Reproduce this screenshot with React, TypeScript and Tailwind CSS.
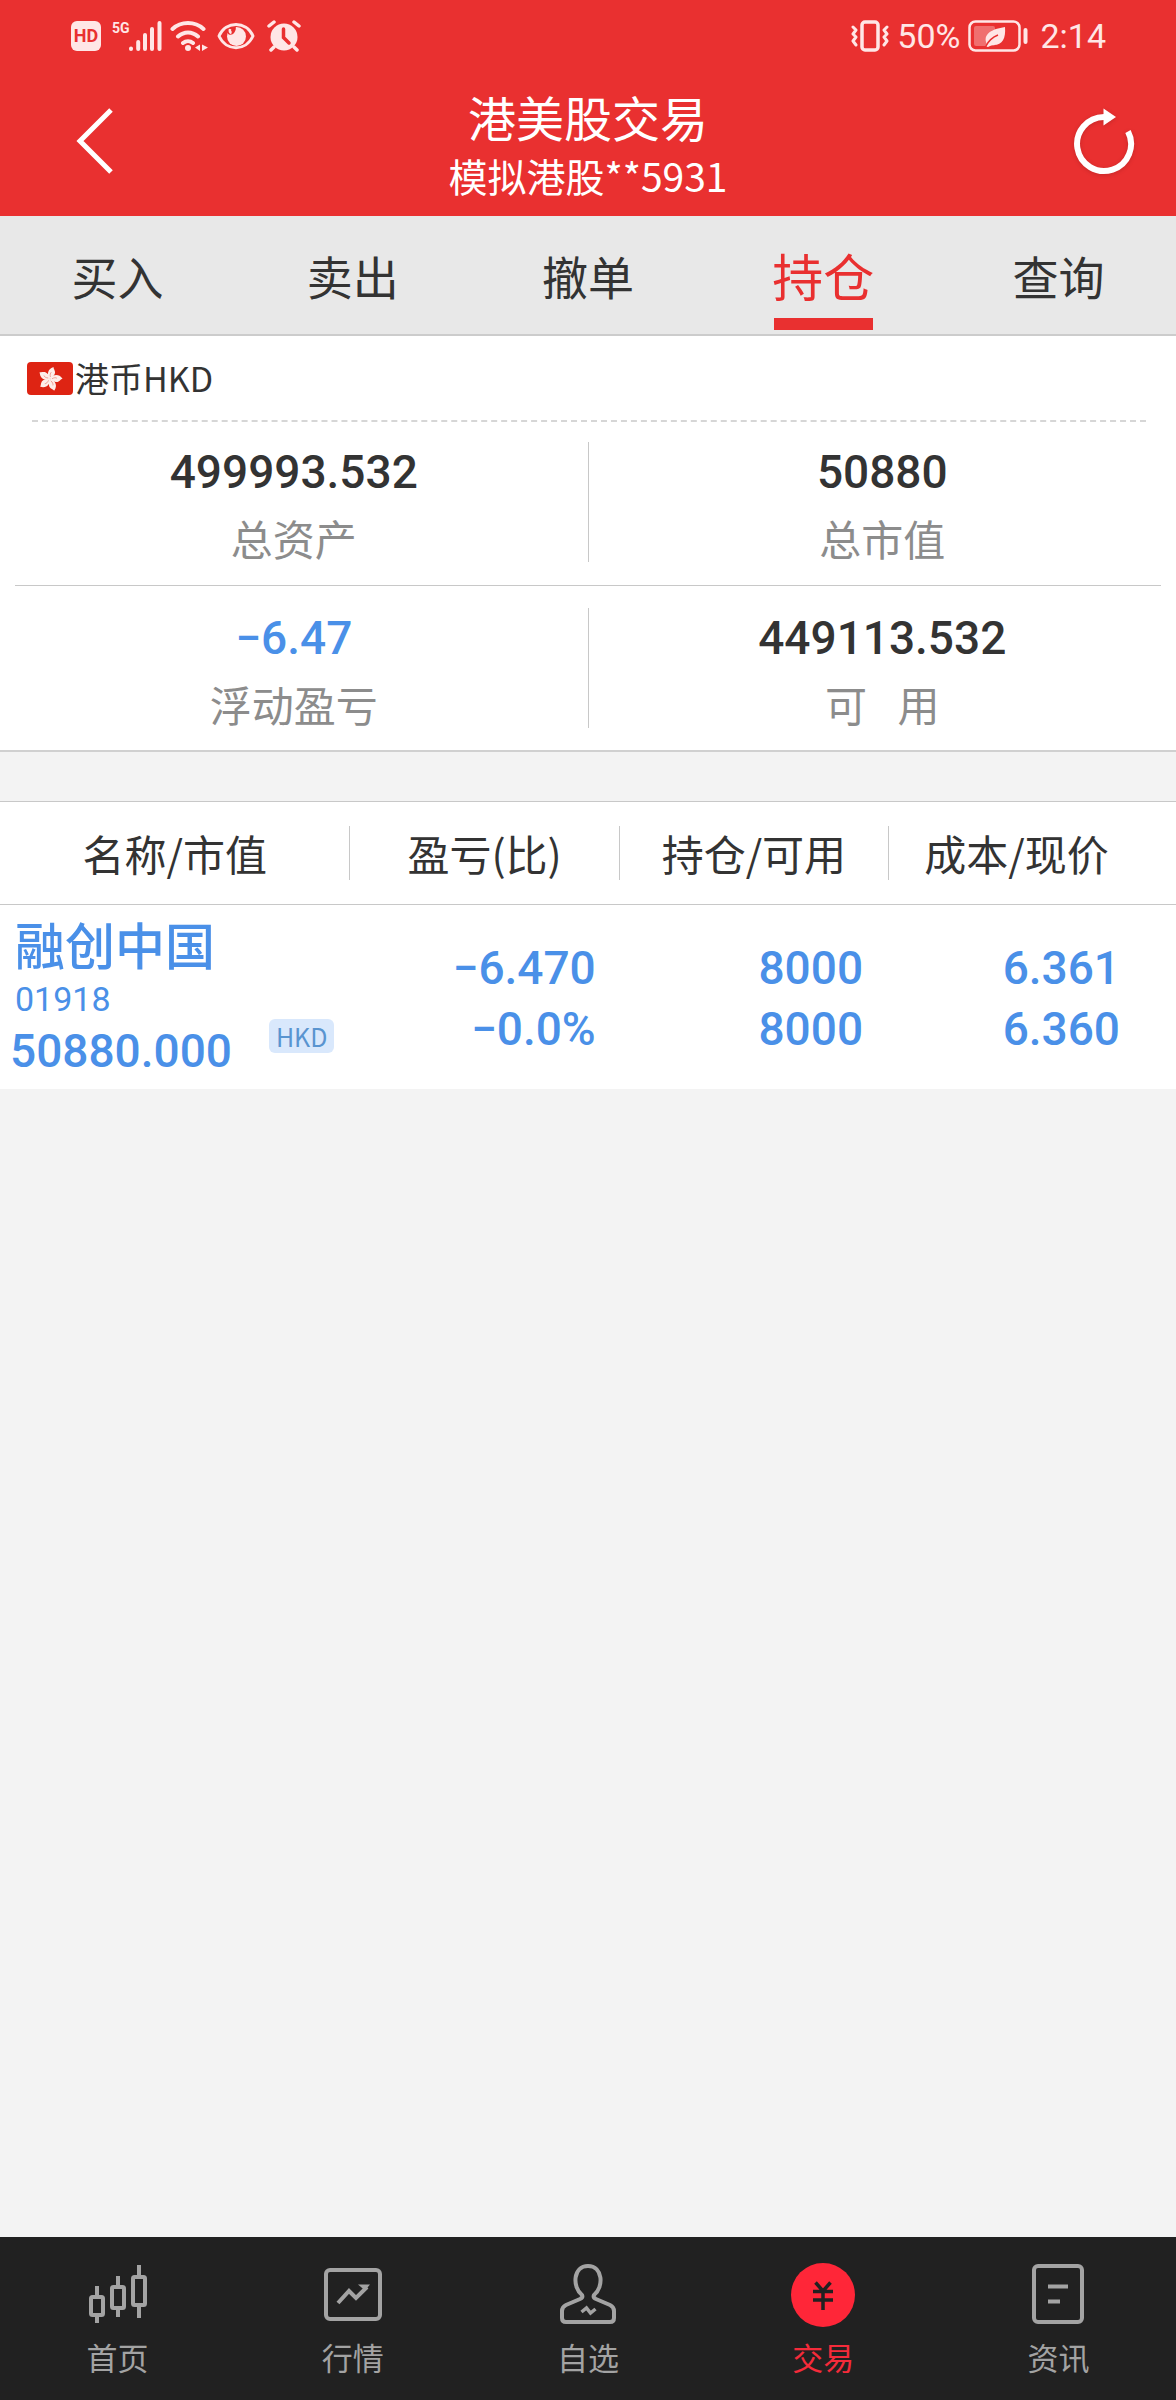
import { useState, type ReactNode } from "react";

const TABS = ["买入", "卖出", "撤单", "持仓", "查询"];

const SUMMARY = [
  [
    { label: "总资产", value: "499993.532" },
    { label: "总市值", value: "50880" },
  ],
  [
    { label: "浮动盈亏", value: "−6.47", down: true },
    { label: "可\u2002\u00a0用", value: "449113.532" },
  ],
];

const COLUMNS = [
  { title: "名称/市值", width: "w-[29.8%]" },
  { title: "盈亏(比)", width: "w-[22.9%]" },
  { title: "持仓/可用", width: "w-[22.9%]" },
  { title: "成本/现价", width: "w-[24.4%] pr-8" },
];

const POSITIONS = [
  {
    name: "融创中国",
    code: "01918",
    marketValue: "50880.000",
    currency: "HKD",
    profit: "−6.470",
    ratio: "−0.0%",
    held: "8000",
    available: "8000",
    cost: "6.361",
    price: "6.360",
  },
];

function StatusBar() {
  return (
    <div className="flex h-[72px] items-center justify-between pr-[70px] pl-[71px] text-[#ffe6e6]">
      <div className="flex items-center">
        <div className="flex size-[30px] items-center justify-center rounded-md bg-[#ffe6e6] font-['Roboto',sans-serif] text-[18px] leading-none font-bold text-[#e93030]">
          HD
        </div>
        <div className="ml-[11px] w-4 self-start font-['Roboto',sans-serif] text-[14px] leading-[16px] font-bold">
          5G
        </div>
        <svg width="34" height="32" viewBox="0 0 34 32" stroke="currentColor" strokeWidth="4" strokeLinecap="round">
          <path d="M3 28.5v.5M10.200 22v7M17 15v14M24 9v20M31.500 3v26" />
        </svg>
        <svg className="ml-2" width="38" height="32" viewBox="0 0 38 32" fill="none" stroke="currentColor" strokeWidth="4" strokeLinecap="round">
          <path d="M2.500 9C11 1 25 1 33.500 9M8 16.500c6-5.500 14-5.500 20 0M13 23c3-2.500 7-2.500 10 0" />
          <circle cx="18" cy="28" r="3" fill="currentColor" stroke="none" />
          <path d="M30 24.500V31l-5-3.500zM32 24.500V31l6-3.500z" fill="currentColor" stroke="none" />
        </svg>
        <svg className="ml-[9px]" width="38" height="28" viewBox="0 0 38 28" fill="none">
          <circle cx="19.500" cy="14.500" r="9.500" fill="currentColor" />
          <path d="M10 10c2-4 5-6.500 8.500-6.500 1 4-.5 6.500-2.500 8.500-2 1.500-5 1-6-2z" fill="#e93030" />
          <path d="M13 7c-.5 2 0 3.500 1.500 4" stroke="currentColor" strokeWidth="2.500" />
          <path d="M2 14C9-1.500 29-1.500 36 14 29 29.500 9 29.500 2 14z" stroke="currentColor" strokeWidth="3" strokeLinejoin="round" />
        </svg>
        <svg className="ml-3" width="34" height="32" viewBox="0 0 34 32" fill="none" strokeLinecap="round">
          <circle cx="17" cy="17" r="13.500" fill="currentColor" />
          <path d="M2 6l5-4M32 6l-5-4M7 27l-3 3M27 27l3 3" stroke="currentColor" strokeWidth="3.500" />
          <path d="M16.500 9v8.500l5.500 5.500" stroke="#e93030" strokeWidth="3.500" />
        </svg>
      </div>
      <div className="flex items-center font-['Roboto',sans-serif] text-[34px] leading-[40px]">
        <svg width="38" height="32" viewBox="0 0 38 32" fill="none" stroke="currentColor" strokeWidth="3" strokeLinecap="round" strokeLinejoin="round">
          <rect x="11" y="2" width="16" height="28" rx="3" strokeWidth="3.500" />
          <path d="M2 7l3 3-3 4 3 3-3 4 3 4M36 7l-3 3 3 4-3 3 3 4-3 4" />
        </svg>
        <span className="ml-2">50%</span>
        <svg className="ml-2" width="60" height="32" viewBox="0 0 60 32" fill="none">
          <rect x="1.500" y="1.500" width="50" height="29" rx="6" stroke="currentColor" strokeWidth="2.500" />
          <rect x="6" y="6" width="21" height="20" rx="2" fill="currentColor" opacity=".35" />
          <path d="M37 7c1 12-3 19-13 18l-4 2c-1.500 0-2-1-1-2.500C14 14 24 9 37 7z" fill="currentColor" />
          <path d="M18 26c3-6 7-9 12-11" stroke="#e93030" strokeWidth="1.500" />
          <path d="M57.500 10v12" stroke="currentColor" strokeWidth="4" strokeLinecap="round" />
        </svg>
        <span className="ml-3">2:14</span>
      </div>
    </div>
  );
}

function Header() {
  return (
    <header className="bg-[#e93030] text-white">
      <StatusBar />
      <div className="grid h-36 grid-cols-[1fr_auto_1fr] items-start">
        <button aria-label="返回" className="ml-16 justify-self-start p-2 pt-8">
          <svg width="48" height="72" viewBox="0 0 48 72" fill="none" stroke="currentColor" strokeWidth="5">
            <path d="M39 6L8 37l31 31" />
          </svg>
        </button>
        <div className="pt-[14px] text-center">
          <h1 className="text-[48px] leading-[60px]">港美股交易</h1>
          <p className="text-[39px] leading-[58px]">模拟港股**5931</p>
        </div>
        <button aria-label="刷新" className="mr-7 justify-self-end p-2 pt-6">
          <svg width="72" height="80" viewBox="0 0 72 80" fill="none" className="drop-shadow-sm">
            <path d="M36 21a27 27 0 1 0 24 14.500" stroke="currentColor" strokeWidth="6" />
            <path d="M35.500 12.500L48 21l-12.500 8.500z" fill="currentColor" />
          </svg>
        </button>
      </div>
    </header>
  );
}

function Flag() {
  return (
    <svg width="46" height="33" viewBox="0 0 46 33" className="rounded">
      <rect width="46" height="33" fill="#de2413" />
      <g fill="#fdeee9">
        {[12, 84, 156, 228, 300].map((angle) => (
          <g key={angle} transform={`translate(23 17) rotate(${angle})`}>
            <path d="M0 0C-4-3-5-9 1-12.500 1-10.500 4.500-9 3.500-5.500 3-3 1.500-1 0 0z" />
            <path d="M0-2C-1-4-1-6 0-7" fill="none" stroke="#e8786c" strokeWidth=".6" />
          </g>
        ))}
      </g>
    </svg>
  );
}

function Summary() {
  return (
    <section className="border-b-2 border-[#d0d0d0] bg-white">
      <div className="flex h-[84px] items-center gap-[2px] pl-[27px] text-[34px] leading-[48px] text-[#333]">
        <Flag />
        <span>港币HKD</span>
      </div>
      <div className="mr-[30px] ml-8 border-t-2 border-dashed border-[#d6d6d6]" />
      {SUMMARY.map((row, i) => (
        <div key={i}>
          {i > 0 && <div className="mx-[15px] border-t border-[#c8c8c8]" />}
          <div className={`flex items-center ${i === 0 ? "h-[163px] pb-1" : "h-[164px]"}`}>
            {row.map((item, j) => (
              <div
                key={item.label}
                className={`flex h-[120px] flex-1 flex-col justify-center pb-1 text-center ${j === 0 ? "border-r border-[#c8c8c8]" : ""}`}
              >
                <div
                  className={`font-['Roboto',sans-serif] text-[46px] leading-[76px] font-medium ${item.down ? "text-[#4a90e8]" : "text-[#333]"}`}
                >
                  {item.value}
                </div>
                <div className="text-[42px] leading-[56px] text-[#8c8c8c]">{item.label}</div>
              </div>
            ))}
          </div>
        </div>
      ))}
    </section>
  );
}

function Pair({ top, bottom, className }: { top: string; bottom: string; className: string }) {
  return (
    <td
      className={`pt-1 text-right align-middle font-['Roboto',sans-serif] text-[46px] leading-[61px] font-medium ${className}`}
    >
      <div>{top}</div>
      <div>{bottom}</div>
    </td>
  );
}

function Positions() {
  return (
    <table className="mt-[49px] w-full table-fixed border-collapse border-t border-[#c8c8c8] bg-white">
      <thead>
        <tr className="h-[103px] border-b border-[#c8c8c8]">
          {COLUMNS.map((col, i) => (
            <th key={col.title} className={`p-0 text-[42px] font-normal text-[#333] ${col.width}`}>
              <div
                className={`leading-[54px] whitespace-nowrap ${i < COLUMNS.length - 1 ? "border-r border-[#c8c8c8]" : ""}`}
              >
                {col.title}
              </div>
            </th>
          ))}
        </tr>
      </thead>
      <tbody className="text-[#4a90e8]">
        {POSITIONS.map((p) => (
          <tr key={p.code}>
            <td className="pt-[10px] pb-[6px]">
              <div className="pl-[15px] text-[50px] leading-[56px] font-medium">{p.name}</div>
              <div className="pt-2 pl-[15px] font-['Roboto',sans-serif] text-[34px] leading-[40px]">{p.code}</div>
              <div className="flex items-start justify-between pr-4 pl-[10px]">
                <span className="font-['Roboto',sans-serif] text-[46px] leading-[64px] font-medium">
                  {p.marketValue}
                </span>
                <span className="rounded-md bg-[#d9e8fc] px-[7px] text-[25px] leading-[34px] text-[#5994d0]">
                  {p.currency}
                </span>
              </div>
            </td>
            <Pair top={p.profit} bottom={p.ratio} className="pr-6" />
            <Pair top={p.held} bottom={p.available} className="pr-[26px]" />
            <Pair top={p.cost} bottom={p.price} className="pr-14" />
          </tr>
        ))}
      </tbody>
    </table>
  );
}

function NavIcon({ children }: { children: ReactNode }) {
  return (
    <svg width="64" height="64" viewBox="0 0 64 64" fill="none" stroke="currentColor" strokeWidth="4">
      {children}
    </svg>
  );
}

const NAV = [
  {
    label: "首页",
    icon: (
      <NavIcon>
        <rect x="5" y="34" width="12" height="18" rx="1.500" />
        <rect x="26" y="24" width="12" height="21" rx="1.500" />
        <rect x="47" y="14" width="12" height="28" rx="1.500" />
        <path d="M11 23v10M11 53v7M32 13v10M32 46v8M53 2v11M53 43v12" />
      </NavIcon>
    ),
  },
  {
    label: "行情",
    icon: (
      <NavIcon>
        <rect x="5" y="7" width="54" height="49" rx="4" />
        <path d="M17 40l11-12 7 7 11-11" />
        <path d="M37 21.500h12l-5 6z" fill="currentColor" stroke="none" />
      </NavIcon>
    ),
  },
  {
    label: "自选",
    icon: (
      <NavIcon>
        <path d="M26 32C16 24 17 3 32 3s16 21 6 29c-1 2 0 3 2 4l14 6c3 1.500 4 3 4 6v7c0 2.500-1.500 4-4 4H10c-2.500 0-4-1.500-4-4v-7c0-3 1-4.500 4-6l14-6c2-1 3-2 2-4z" />
        <path d="M25.500 49l5-4 4 5 5-4" strokeWidth="3.500" />
      </NavIcon>
    ),
  },
  {
    label: "交易",
    icon: (
      <NavIcon>
        <circle cx="32" cy="32" r="32" fill="#ff2638" stroke="none" />
        <path d="M24.500 19.500L32 28l7.500-8.500M22 28.500h20M22 37h20M32 27v20" stroke="#212121" strokeWidth="3.500" />
      </NavIcon>
    ),
  },
  {
    label: "资讯",
    icon: (
      <NavIcon>
        <rect x="8" y="3" width="48" height="56" rx="4" />
        <path d="M22 23.500h20M22 38.500h12" />
      </NavIcon>
    ),
  },
];

export default function App() {
  const [tab, setTab] = useState("持仓");
  const [page, setPage] = useState("交易");

  return (
    <div className="flex min-h-screen flex-col bg-[#f3f3f3] font-['Noto_Sans_CJK_SC',sans-serif]">
      <Header />
      <nav className="flex h-[120px] border-b-2 border-[#cccccc] bg-[#e8e8e8]">
        {TABS.map((name) => (
          <button
            key={name}
            onClick={() => setTab(name)}
            className={`flex flex-1 flex-col items-center justify-end ${
              tab === name ? "text-[51px] text-[#e93030]" : "text-[46px] text-[#333]"
            }`}
          >
            <span className="leading-[86px]">{name}</span>
            <span className={`mb-1 h-3 w-[99px] ${tab === name ? "bg-[#e93030]" : ""}`} />
          </button>
        ))}
      </nav>
      <Summary />
      <Positions />
      <nav className="mt-auto flex h-[163px] bg-[#212121]">
        {NAV.map((item) => (
          <button
            key={item.label}
            onClick={() => setPage(item.label)}
            className={`flex flex-1 flex-col items-center pt-[26px] text-[31px] leading-[60px] ${
              page === item.label ? "text-[#f52b3a]" : "text-[#a3a3a3]"
            }`}
          >
            {item.icon}
            {item.label}
          </button>
        ))}
      </nav>
    </div>
  );
}
